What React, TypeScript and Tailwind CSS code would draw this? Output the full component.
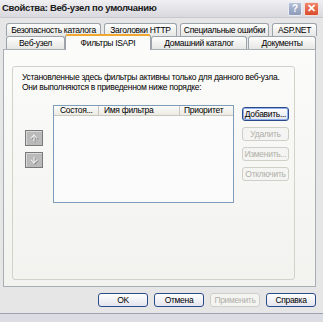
import { ArrowUp, ArrowDown } from 'lucide-react'

const TOP_TABS = [
  { label: 'Безопасность каталога', w: 'w-[95px]' },
  { label: 'Заголовки HTTP', w: 'w-[73px]' },
  { label: 'Специальные ошибки', w: 'w-[89px]' },
  { label: 'ASP.NET', w: 'w-[45px]' },
]

function Tab({ label, w }: { label: string; w: string }) {
  return (
    <div
      className={`${w} h-[13px] flex items-center justify-center whitespace-nowrap rounded-t-[3px] border border-b-0 border-[#9ca3ab] bg-gradient-to-b from-[#fefefe] to-[#e6e6e4] leading-none`}
    >
      {label}
    </div>
  )
}

function Btn({ label, w, disabled, active }: { label: string; w: string; disabled?: boolean; active?: boolean }) {
  return (
    <div
      className={`${w} h-[14px] flex items-center justify-center whitespace-nowrap rounded-[3px] border leading-none ${
        disabled
          ? 'border-[#cfcfc8] text-[#b0b0a8] bg-[#f4f4f2]'
          : active
            ? 'border-[#2a4a8a] bg-gradient-to-b from-[#ffffff] to-[#e3e5ee] shadow-[inset_0_0_0_1px_#8fb0ea]'
            : 'border-[#2a4a8a] bg-gradient-to-b from-[#ffffff] to-[#e3e5ee]'
      }`}
    >
      {label}
    </div>
  )
}

function MoveBtn({ down }: { down?: boolean }) {
  return (
    <div className="w-[18px] h-[16px] flex items-center justify-center border border-[#7a7a7a] bg-[#bababa] shadow-[inset_1px_1px_0_#d8d8d8]">
      {down ? (
        <ArrowDown className="w-[10px] h-[10px] text-[#f2f2f2] drop-shadow-[1px_1px_0_#8a8a8a]" strokeWidth={2.5} />
      ) : (
        <ArrowUp className="w-[10px] h-[10px] text-[#f2f2f2] drop-shadow-[1px_1px_0_#8a8a8a]" strokeWidth={2.5} />
      )}
    </div>
  )
}

export default function App() {
  return (
    <div className="w-[323px] h-[322px] overflow-hidden bg-[#e6e6e6] flex flex-col font-['Liberation_Sans',sans-serif] text-[8.5px] tracking-[-0.3px] text-black">
      {/* Title bar */}
      <div className="h-[18px] flex items-center justify-between pl-[2px] pr-[4px] bg-gradient-to-b from-[#f0f0f3] to-[#d8d8de] border-b border-[#c8c8d0]">
        <span className="font-bold text-[9.5px] tracking-[-0.3px] text-[#1a1a1a]">Свойства: Веб-узел по умолчанию</span>
        <div className="flex gap-[2px]">
          <div className="w-[14px] h-[14px] rounded-[2px] bg-gradient-to-b from-[#b5bfd6] to-[#8e9ab8] border border-[#e8ecf4] text-white font-bold text-[10px] flex items-center justify-center leading-none">
            ?
          </div>
          <div className="w-[15px] h-[14px] rounded-[2px] bg-gradient-to-b from-[#f0846a] to-[#d84b2a] border border-[#f4e0da] text-white font-bold text-[11px] flex items-center justify-center leading-none">
            ✕
          </div>
        </div>
      </div>

      {/* Tabs */}
      <div className="mt-[5px] px-[3px]">
        <div className="flex gap-[3px] pl-[3px]">
          {TOP_TABS.map(t => (
            <Tab key={t.label} {...t} />
          ))}
        </div>
        <div className="flex pl-[3px] items-end h-[13px]">
          <Tab label="Веб-узел" w="w-[59px]" />
          <div className="relative z-10 w-[86px] h-[16px] -mb-[1px] flex items-center justify-center rounded-t-[3px] border border-b-0 border-[#9ca3ab] border-t-2 border-t-[#f0a830] bg-[#fbfbf9] leading-none">
            Фильтры ISAPI
          </div>
          <Tab label="Домашний каталог" w="w-[96px]" />
          <div className="ml-[1px]">
            <Tab label="Документы" w="w-[68px]" />
          </div>
        </div>

        {/* Panel */}
        <div className="w-[313px] h-[238px] border border-[#a9aeb4] bg-gradient-to-b from-[#fbfbf9] to-[#f2f2ef] pl-[8px] pt-[16px]">
          <div className="w-[283px] h-[214px] rounded-[3px] border border-[#d2d2c8] pl-[9px] pt-[5px]">
            <div className="leading-[10px] whitespace-nowrap">
              <div>Установленные здесь фильтры активны только для данного веб-узла.</div>
              <div>Они выполняются в приведенном ниже порядке:</div>
            </div>
            <div className="flex items-start mt-[13px] -ml-[9px]">
              <div className="w-[40px] pl-[12px] pt-[25px] flex flex-col gap-[6px]">
                <MoveBtn />
                <MoveBtn down />
              </div>
              <div className="w-[181px] h-[98px] border border-[#7f9db9] bg-[#fbfbfb] flex flex-col">
                <div className="h-[10px] flex items-center border-b border-[#c8c8c0] bg-gradient-to-b from-[#fbfbf9] to-[#ebeae3] leading-none whitespace-nowrap">
                  <div className="w-[45px] pl-[6px] border-r border-[#c8c8c0]">Состоя...</div>
                  <div className="w-[81px] pl-[5px] border-r border-[#c8c8c0]">Имя фильтра</div>
                  <div className="pl-[4px]">Приоритет</div>
                </div>
              </div>
              <div className="ml-[8px] mt-[2px] flex flex-col gap-[6px]">
                <Btn label="Добавить..." w="w-[47px]" active />
                <Btn label="Удалить" w="w-[47px]" disabled />
                <Btn label="Изменить..." w="w-[47px]" disabled />
                <Btn label="Отключить" w="w-[47px]" disabled />
              </div>
            </div>
          </div>
        </div>
      </div>

      {/* Dialog buttons */}
      <div className="mt-[6px] flex justify-end gap-[6px] pr-[7px]">
        <Btn label="OK" w="w-[50px]" />
        <Btn label="Отмена" w="w-[50px]" />
        <Btn label="Применить" w="w-[50px]" disabled />
        <Btn label="Справка" w="w-[50px]" />
      </div>

      <div className="mt-auto h-[9px] border-t border-[#9ea3b4] bg-[#dcdde3]" />
    </div>
  )
}
